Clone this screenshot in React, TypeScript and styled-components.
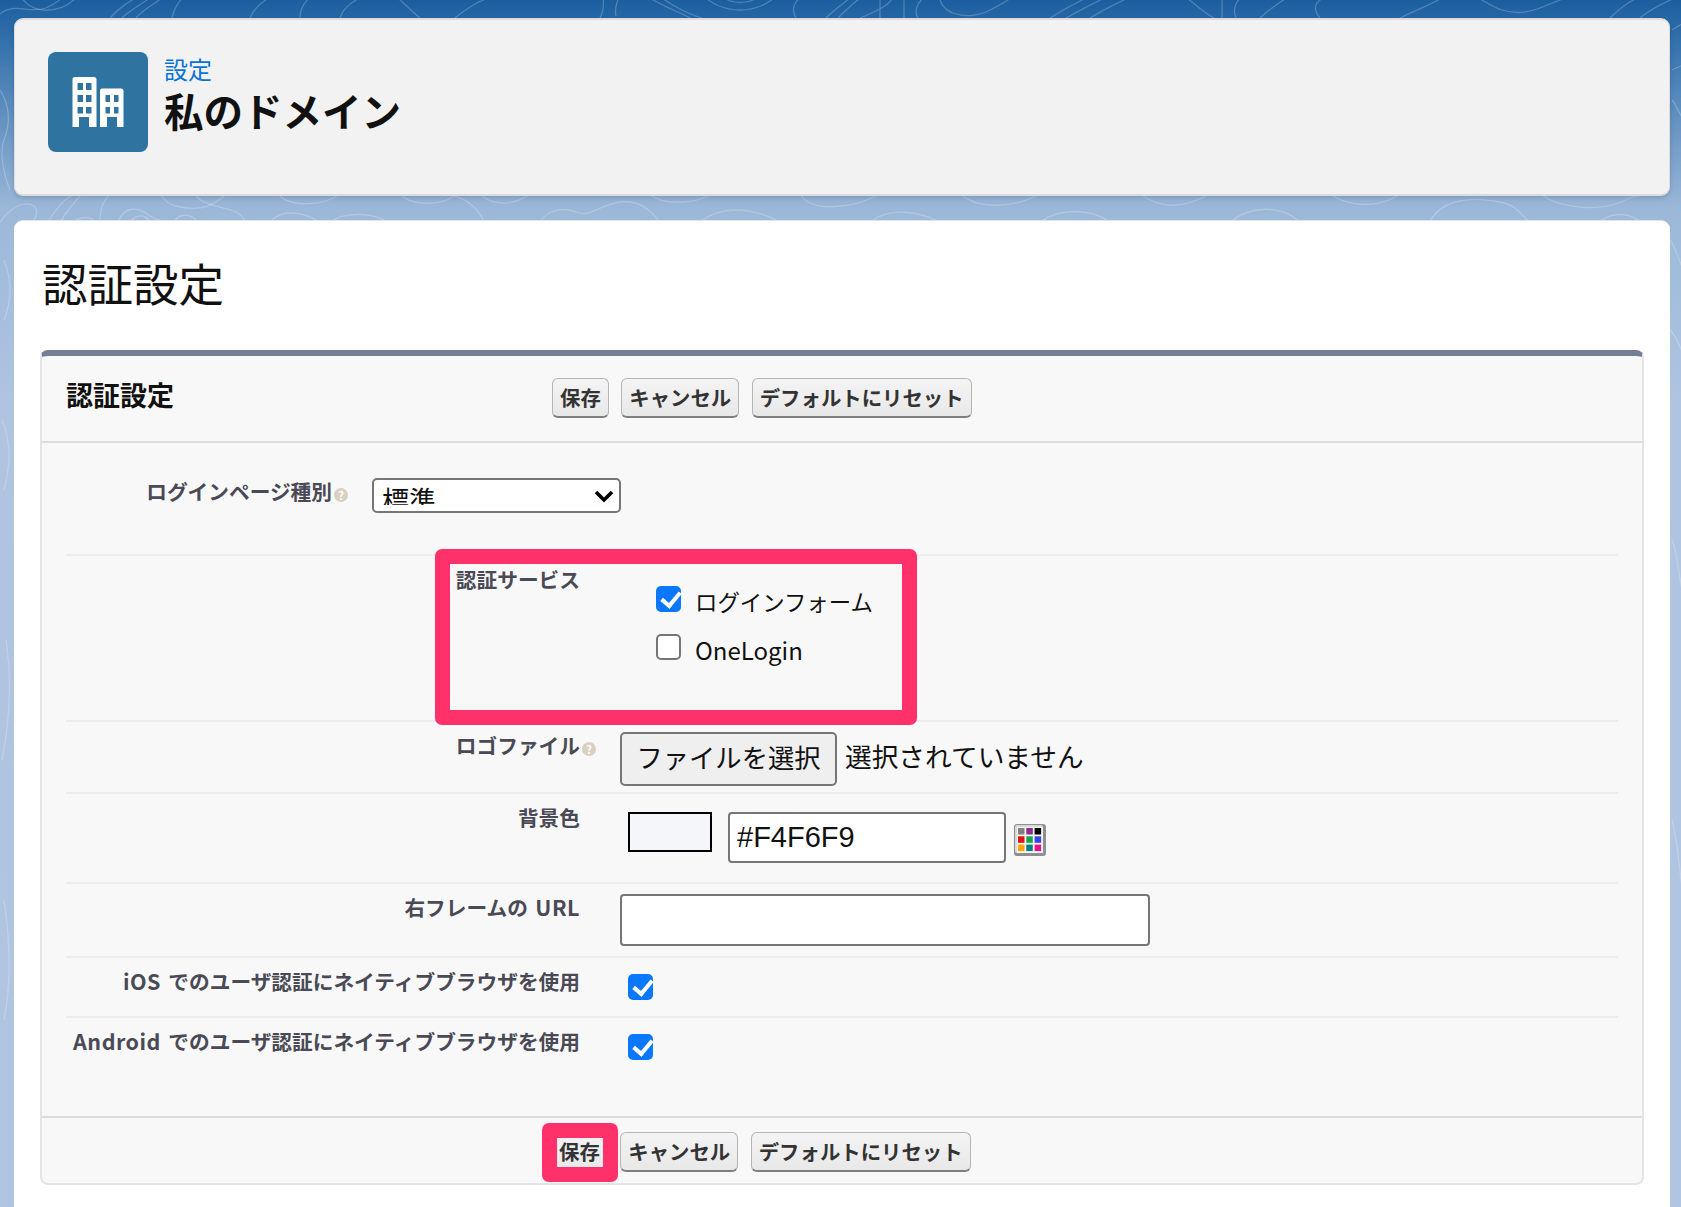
import React from "react";
import styled, { createGlobalStyle } from "styled-components";

const Global = createGlobalStyle`
  html, body { margin: 0; padding: 0; }
  body { font-family: "Noto Sans CJK JP", "Noto Sans", sans-serif; color: #111; }
  * { box-sizing: border-box; }
`;

const Page = styled.div`
  position: relative;
  width: 1681px;
  height: 1207px;
  overflow: hidden;
  padding: 18px 11px 0 14px;
  background: linear-gradient(180deg, #1b5e9f 0, #3f79b1 60px, #9cb8d9 210px, #aec4e1 400px, #b0c5e2 100%);
`;

const Topo = styled.svg`
  position: absolute;
  inset: 0;
  width: 100%;
  height: 100%;
  fill: none;
  stroke: rgba(255, 255, 255, 0.22);
  stroke-width: 1.3;
`;

const HeaderCard = styled.header`
  position: relative;
  display: flex;
  align-items: flex-start;
  height: 178px;
  padding: 32px 33px 0;
  background: #f2f2f2;
  border: 2px solid #dcdcdc;
  border-left-width: 1px;
  border-right-width: 1px;
  border-radius: 9px;
  box-shadow: 0 2px 5px rgba(0, 0, 0, 0.14);
`;

const AppIcon = styled.div`
  width: 100px;
  height: 100px;
  border-radius: 8px;
  background: #2f74a1;
  flex: none;
`;

const HeaderText = styled.div`
  display: flex;
  flex-direction: column;
  margin-left: 16px;
`;

const Crumb = styled.a`
  font-size: 24px;
  line-height: 34px;
  color: #0b72d3;
`;

const HeaderTitle = styled.h1`
  margin: 0;
  font-size: 39.5px;
  line-height: 48px;
  font-weight: 700;
  color: #111;
`;

const ContentCard = styled.main`
  position: relative;
  margin-top: 24px;
  height: 990px;
  padding: 31px 26px 0 26px;
  background: #fff;
  border-radius: 9px 9px 0 0;
  border-top: 1px solid #e4e4e4;
`;

const PageTitle = styled.h2`
  margin: 0 0 38px 2px;
  font-size: 45.5px;
  line-height: 60px;
  font-weight: 400;
  color: #111;
`;

const Panel = styled.section`
  background: #f8f8f8;
  border: 2px solid #e3e4e6;
  border-top: 6px solid #747e96;
  border-radius: 8px;
`;

const PanelHeader = styled.div`
  display: flex;
  height: 87px;
  padding: 21px 0 0 24px;
  border-bottom: 2px solid #dcdcdc;
`;

const PanelTitle = styled.h3`
  width: 486px;
  margin: 0;
  font-size: 27px;
  line-height: 36px;
  font-weight: 700;
  color: #111;
`;

const ButtonRow = styled.div<{ $offset?: number }>`
  display: flex;
  gap: 12.5px;
  margin-top: ${(p) => p.$offset ?? 0}px;
`;

const SfButton = styled.button`
  height: 40px;
  padding: 0 7px 2px;
  font-family: inherit;
  font-size: 20.4px;
  line-height: 34px;
  font-weight: 700;
  color: #333;
  background: linear-gradient(180deg, #f4f4f4, #e8e8e9);
  border: 1.5px solid #b5b5b5;
  border-bottom: 2px solid #7f7f7f;
  border-radius: 6px;
  white-space: nowrap;
`;

const FormBody = styled.div`
  padding: 0 24px 0 24px;
`;

const Row = styled.div<{ $height: number; $labelWidth?: number; $top?: number; $last?: boolean }>`
  position: relative;
  display: grid;
  grid-template-columns: ${(p) => p.$labelWidth ?? 530}px 1fr;
  column-gap: 24px;
  align-items: start;
  height: ${(p) => p.$height}px;
  padding-top: ${(p) => p.$top ?? 10}px;
  border-bottom: ${(p) => (p.$last ? "none" : "2px solid #ececec")};
`;

const Label = styled.label`
  display: flex;
  justify-content: flex-end;
  padding-right: 16px;
  font-size: 20.7px;
  line-height: 26px;
  font-weight: 700;
  color: #4a4a56;
  white-space: pre;
`;

const Latin = styled.span`
  font-size: 21.5px;
  letter-spacing: 0.5px;
  word-spacing: 2px;
`;

const Help = styled.span`
  flex: none;
  width: 14px;
  height: 14px;
  margin: 10px -16px 0 2px;
  border-radius: 50%;
  background: #d9d0c1;
  color: #fff;
  font-size: 11px;
  line-height: 14px;
  text-align: center;
`;

const Value = styled.div`
  display: flex;
  align-items: flex-start;
`;

const SelectWrap = styled.div`
  position: relative;
  width: 249px;
  height: 35px;
`;

const Select = styled.select`
  width: 100%;
  height: 100%;
  padding: 0 8px 6px;
  appearance: none;
  font-family: inherit;
  font-size: 27px;
  color: #111;
  background: #fff;
  border: 2px solid #767676;
  border-radius: 5px;
`;

const SelectArrow = styled.svg`
  position: absolute;
  right: 7px;
  top: 11px;
  width: 20px;
  height: 14px;
`;

const Options = styled.div`
  display: flex;
  flex-direction: column;
  margin: 20px 0 0 36px;
`;

const Option = styled.label`
  display: flex;
  align-items: flex-start;
  gap: 14px;
  height: 48px;
  line-height: 30px;
  color: #111;
`;

const OptionText = styled.span<{ $latin?: boolean }>`
  font-size: ${(p) => (p.$latin ? 24 : 22.4)}px;
  line-height: ${(p) => (p.$latin ? 32 : 30)}px;
`;

const Check = styled.input.attrs({ type: "checkbox" })<{ $plain?: boolean }>`
  position: relative;
  flex: none;
  appearance: none;
  width: 25px;
  height: 26px;
  margin: ${(p) => (p.$plain ? "6px 0 0 8px" : "0")};
  background: #fff;
  border: 2px solid #767676;
  border-radius: 5px;

  &:checked {
    background: #0a78fd;
    border-color: #0a78fd;
  }

  &:checked::after {
    content: "";
    position: absolute;
    left: 6.5px;
    top: 0;
    width: 8px;
    height: 15px;
    border: solid #fff;
    border-width: 0 4px 4px 0;
    transform: rotate(40deg);
  }
`;

const FileButton = styled.button`
  width: 217px;
  height: 54px;
  padding: 0 0 6px;
  font-family: inherit;
  font-size: 26.3px;
  color: #111;
  background: #efefef;
  border: 2px solid #767676;
  border-radius: 5px;
`;

const FileName = styled.span`
  margin: 5px 0 0 8px;
  font-size: 26.7px;
  line-height: 38px;
  color: #111;
`;

const Swatch = styled.div`
  width: 84px;
  height: 40px;
  margin: 8px 16px 0 8px;
  background: #f4f6f9;
  border: 2px solid #000;
`;

const ColorInput = styled.input`
  width: 278px;
  height: 51px;
  margin-top: 8px;
  padding: 0 7px;
  font-family: "Liberation Sans", sans-serif;
  font-size: 29px;
  color: #111;
  background: #fff;
  border: 2px solid #767676;
  border-radius: 4px;
`;

const Palette = styled.svg`
  width: 32px;
  height: 32px;
  margin: 20px 0 0 8px;
`;

const UrlInput = styled.input`
  width: 530px;
  height: 52px;
  background: #fff;
  border: 2px solid #767676;
  border-radius: 4px;
`;

const Footer = styled.div`
  height: 67px;
  padding: 14px 0 0 509px;
  border-top: 2px solid #dcdcdc;
`;

const Marked = styled.span`
  position: relative;
  display: flex;
`;

const Frame = styled.span`
  position: absolute;
  border: 15px solid #ff316b;
  border-radius: 7px;
  pointer-events: none;
`;

const ServiceFrame = styled(Frame)`
  left: 369px;
  top: -7px;
  width: 482px;
  height: 176px;
`;

const SaveFrame = styled(Frame)`
  inset: -9px -10px -10px -9px;
`;

const contours = [
  "M0 14C14 2 30 14 46 8 60 2 66-6 72-14",
  "M20-6C28 14 60 18 82-8",
  "M110 18C122 4 136-2 150-10M122 18C132 8 150 0 160-10M136 18C146 6 160 2 172-10",
  "M172 18C174 8 180-2 192-10M250 18C254 8 262 0 280-8",
  "M300 18C300 8 306-2 320-10M340 18C344 6 354 0 372-8",
  "M420 18C408 8 400 0 392-8M455 18C470 6 480 0 500-6",
  "M600 18C604 10 604 0 602-8M616 16C614 8 618-2 622-8",
  "M640-8C660 6 680 12 690 18M655-8C668 4 688 14 702 18",
  "M700-8C720 16 760 16 780-8M716-8C730 6 750 6 766-8",
  "M796 18C790 8 795-2 810-8M826 18C836 8 848 0 858-8M838 18C848 8 856 0 870-8",
  "M860 18C880 10 892 4 896-8M880-4V18M904-8V18M918 18C912 8 920-2 934-8",
  "M940-8C936 14 968 22 990 10 1006 2 1012-2 1016-8",
  "M1050 18C1066 8 1080 0 1100-8M1066 18C1084 8 1096 2 1116-8M1090 18C1106 8 1120 2 1140-8",
  "M1180-8C1194 4 1206 14 1214 18M1222 18V-8M1236 18C1232 8 1236-2 1250-8",
  "M1260 18C1270 8 1280 2 1296-8M1320 18C1310 6 1316-2 1340-8",
  "M1400 18C1420 8 1438 2 1452-8M1470-8C1490 6 1510 20 1540 8 1560 0 1570-4 1580-8",
  "M1610 18C1620 8 1630 0 1650-8M1640 18C1652 8 1668 0 1690-8",
  "M0 90C8 102 12 120 4 140 0 150 2 170 10 190",
  "M4 260C12 280 12 300 4 320M2 420C10 440 12 460 4 490M6 640C12 680 10 720 2 760M4 900C10 940 12 980 4 1020",
  "M1672 30C1678 26 1681 24 1690 20M1672 70C1680 66 1686 64 1690 62M1672 100C1680 110 1680 120 1690 124",
  "M1670 240C1678 250 1680 270 1690 280M1670 330C1680 340 1684 360 1690 370M1672 540C1680 560 1680 600 1690 620M1672 820C1682 860 1680 900 1690 940",
  "M0 222C10 208 24 200 34 206 40 212 34 222 30 226",
  "M48 222C54 212 62 200 74 194M60 222C68 210 74 202 82 194M66 212L62 220M74 222C80 216 90 216 96 222",
  "M100 222C100 208 104 198 112 194M118 222C124 206 138 206 150 216 160 222 168 222 180 222M130 222C136 214 146 214 150 222",
  "M160 194C164 198 166 204 176 206 198 212 214 206 226 194M174 222C178 214 190 212 198 222",
  "M196 194C198 204 220 206 236 212 244 216 244 220 248 226",
  "M278 194C288 206 320 208 340 194M270 222C280 210 300 210 320 222M330 222C344 212 372 212 388 222",
  "M400 194C410 206 440 206 454 196 470 200 480 212 484 222M480 194C490 204 510 208 530 194",
  "M540 222C546 212 560 206 576 212 590 218 596 206 620 202 640 200 650 210 660 222M650 194C660 204 690 206 712 194",
  "M700 222C720 206 750 206 780 222M800 194C810 212 850 210 880 194M870 222C890 206 920 212 940 222",
  "M960 194C976 208 1010 210 1040 194M1040 222C1060 208 1090 208 1110 222M1140 194C1160 208 1180 210 1210 194",
  "M1230 222C1250 206 1280 204 1300 222M1330 194C1350 208 1380 208 1400 194M1430 222C1440 200 1470 196 1500 202 1520 206 1520 216 1530 222",
  "M1540 194C1560 208 1600 214 1630 198 1640 194 1650 194 1660 194M1600 222C1610 212 1630 212 1640 222",
];

function BuildingGlyph() {
  return (
    <svg viewBox="0 0 100 100" width="100" height="100">
      <path
        fill="#fff"
        fillRule="evenodd"
        d="M27 25h19a2.500 2.500 0 0 1 2.500 2.500V75H41V65H31v10H24.500V27.500A2.500 2.500 0 0 1 27 25ZM29.500 31v7H35v-7ZM38 31v7h5.500v-7ZM29.500 43v7H35v-7ZM38 43v7h5.500v-7ZM29.500 55v6.500H35V55ZM38 55v6.500h5.500V55ZM54 36.500h19a2.500 2.500 0 0 1 2.500 2.500V75H69V65H59v10H52V38.500a2 2 0 0 1 2-2ZM57.500 43v7H62v-7ZM66 43v7h4.500v-7ZM57.500 55v6.500H62V55ZM66 55v6.500h4.500V55Z"
      />
    </svg>
  );
}

const paletteCells = ["#808080", "#8e2b8f", "#000000", "#e01010", "#10a848", "#3a3ff0", "#ffa500", "#008080", "#e8108a"];

export default function App() {
  const buttons = (
    <>
      <SfButton>キャンセル</SfButton>
      <SfButton>デフォルトにリセット</SfButton>
    </>
  );
  return (
    <>
      <Global />
      <Page>
        <Topo viewBox="0 0 1681 1207">
          {contours.map((d, i) => (
            <path key={i} d={d} />
          ))}
        </Topo>
        <HeaderCard>
          <AppIcon>
            <BuildingGlyph />
          </AppIcon>
          <HeaderText>
            <Crumb>設定</Crumb>
            <HeaderTitle>私のドメイン</HeaderTitle>
          </HeaderText>
        </HeaderCard>
        <ContentCard>
          <PageTitle>認証設定</PageTitle>
          <Panel>
            <PanelHeader>
              <PanelTitle>認証設定</PanelTitle>
              <ButtonRow $offset={1}>
                <SfButton>保存</SfButton>
                {buttons}
              </ButtonRow>
            </PanelHeader>
            <FormBody>
              <Row $height={113} $labelWidth={282} $top={35}>
                <Label>
                  ログインページ種別<Help>?</Help>
                </Label>
                <Value>
                  <SelectWrap>
                    <Select defaultValue="std">
                      <option value="std">標準</option>
                    </Select>
                    <SelectArrow viewBox="0 0 20 14">
                      <path d="M2 3l8 8 8-8" fill="none" stroke="#000" strokeWidth="3.6" />
                    </SelectArrow>
                  </SelectWrap>
                </Value>
              </Row>
              <Row $height={166}>
                <Label>認証サービス</Label>
                <Options>
                  <Option>
                    <Check defaultChecked />
                    <OptionText>ログインフォーム</OptionText>
                  </Option>
                  <Option>
                    <Check />
                    <OptionText $latin>OneLogin</OptionText>
                  </Option>
                </Options>
                <ServiceFrame />
              </Row>
              <Row $height={72}>
                <Label>
                  ロゴファイル<Help>?</Help>
                </Label>
                <Value>
                  <FileButton>ファイルを選択</FileButton>
                  <FileName>選択されていません</FileName>
                </Value>
              </Row>
              <Row $height={90}>
                <Label>背景色</Label>
                <Value>
                  <Swatch />
                  <ColorInput defaultValue="#F4F6F9" />
                  <Palette viewBox="0 0 32 32">
                    <rect width="32" height="32" rx="3" fill="#8f8f8f" />
                    <rect x="1" y="1" width="28" height="28" rx="2" fill="#d8d8d8" />
                    <rect x="3" y="3" width="26" height="26" fill="#f6f6f6" />
                    {paletteCells.map((c, i) => (
                      <rect key={c} x={4 + (i % 3) * 8.300} y={4 + Math.floor(i / 3) * 8.300} width="6.500" height="6.500" fill={c} />
                    ))}
                  </Palette>
                </Value>
              </Row>
              <Row $height={74}>
                <Label>
                  右フレームの<Latin> URL</Latin>
                </Label>
                <Value>
                  <UrlInput />
                </Value>
              </Row>
              <Row $height={60}>
                <Label>
                  <Latin>iOS </Latin>でのユーザ認証にネイティブブラウザを使用
                </Label>
                <Value>
                  <Check $plain defaultChecked />
                </Value>
              </Row>
              <Row $height={98} $last>
                <Label>
                  <Latin>Android </Latin>でのユーザ認証にネイティブブラウザを使用
                </Label>
                <Value>
                  <Check $plain defaultChecked />
                </Value>
              </Row>
            </FormBody>
            <Footer>
              <ButtonRow>
                <Marked>
                  <SfButton>保存</SfButton>
                  <SaveFrame />
                </Marked>
                {buttons}
              </ButtonRow>
            </Footer>
          </Panel>
        </ContentCard>
      </Page>
    </>
  );
}
